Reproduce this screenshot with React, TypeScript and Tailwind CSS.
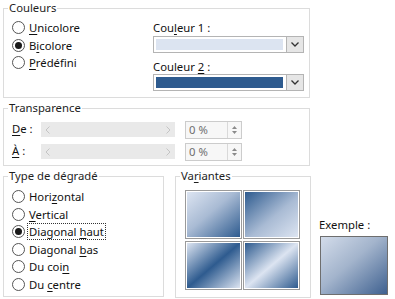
import React from "react";

const F = { fontFamily: '"Noto Sans", "Segoe UI", sans-serif' };

function U({ children }: { children: React.ReactNode }) {
  return <span className="underline underline-offset-[2px] decoration-[1px]">{children}</span>;
}

function Radio({ checked }: { checked?: boolean }) {
  return (
    <span className="w-[13px] h-[13px] rounded-full border border-[#555] bg-white flex items-center justify-center shrink-0">
      {checked && <span className="w-[7px] h-[7px] rounded-full bg-[#1a1a1a]" />}
    </span>
  );
}

function RadioRow({ checked, children, focus, h = "h-[17.5px]" }: { checked?: boolean; children: React.ReactNode; focus?: boolean; h?: string }) {
  return (
    <div className={`flex items-center ${h}`}>
      <Radio checked={checked} />
      <span
        className={`ml-[3px] leading-[15px] px-[1px] ${focus ? "outline outline-1 outline-dotted outline-[#333]" : ""}`}
      >
        {children}
      </span>
    </div>
  );
}

function Group({ title, className, children }: { title: React.ReactNode; className: string; children: React.ReactNode }) {
  return (
    <div className={`relative border border-[#dcdcdc] ${className}`}>
      <span className="absolute left-[4px] top-[-9px] bg-white px-[1px] leading-[16px] text-[#1e1e1e]">{title}</span>
      {children}
    </div>
  );
}

function Combo({ color }: { color: string }) {
  return (
    <div className="flex h-[17px] w-[151px] border border-[#b4b4b4] bg-white">
      <div className="flex-1 p-[2px] pr-[3px]">
        <div className="h-full" style={{ background: color }} />
      </div>
      <div className="w-[17px] border-l border-[#b4b4b4] bg-[#e6e6e6] flex items-center justify-center">
        <svg width="8" height="5" viewBox="0 0 8 5">
          <path d="M0.5 0.5 L4 4 L7.5 0.5" fill="none" stroke="#333" strokeWidth="1.3" />
        </svg>
      </div>
    </div>
  );
}

function Track() {
  return (
    <div className="w-[134px] h-[15px] bg-[#e9e9e9] flex items-center justify-between px-[4px]">
      <svg width="5" height="8" viewBox="0 0 5 8">
        <path d="M4.5 0.5 L1 4 L4.5 7.5" fill="none" stroke="#c4c4c4" strokeWidth="1" />
      </svg>
      <svg width="5" height="8" viewBox="0 0 5 8">
        <path d="M0.5 0.5 L4 4 L0.5 7.5" fill="none" stroke="#c4c4c4" strokeWidth="1" />
      </svg>
    </div>
  );
}

function Spin() {
  return (
    <div className="flex w-[57px] h-[18px] border border-[#cccccc] bg-[#f7f7f7]">
      <div className="flex-1 pl-[3px] text-[#6e6e6e] leading-[16px]">0 %</div>
      <div className="w-[14px] border-l border-[#d9d9d9] flex flex-col items-center justify-center gap-[2px]">
        <svg width="5" height="3" viewBox="0 0 5 3"><path d="M0 3 L2.5 0 L5 3 Z" fill="#8a8a8a" /></svg>
        <svg width="5" height="3" viewBox="0 0 5 3"><path d="M0 0 L2.5 3 L5 0 Z" fill="#8a8a8a" /></svg>
      </div>
    </div>
  );
}

const L = "#dce4f1";
const D = "#2e5b8f";

function Tile({ bg }: { bg: string }) {
  return (
    <div className="w-[57px] h-[49px] border border-[#9a9a9a] p-[1px] bg-white">
      <div className="w-full h-full" style={{ background: bg }} />
    </div>
  );
}

export default function App() {
  return (
    <div className="w-[395px] h-[299px] bg-white text-[11.3px] text-[#111] overflow-hidden" style={F}>
      <div className="pt-[8px] pl-[3px]">
        <Group title="Couleurs" className="w-[307px] h-[90px]">
          <div className="flex">
            <div className="w-[149px] pl-[8px] pt-[10px]">
              <RadioRow><U>U</U>nicolore</RadioRow>
              <RadioRow checked>B<U>i</U>colore</RadioRow>
              <RadioRow><U>P</U>rédéfini</RadioRow>
            </div>
            <div className="pt-[11px]">
              <div className="leading-[15px]">Cou<U>l</U>eur 1 :</div>
              <div className="mt-[1px]"><Combo color={L} /></div>
              <div className="leading-[15px] mt-[6px]">Couleur <U>2</U> :</div>
              <div className="mt-[0px]"><Combo color={D} /></div>
            </div>
          </div>
        </Group>

        <Group title="Transparence" className="w-[307px] h-[58px] mt-[10px]">
          <div className="pt-[11px] flex flex-col gap-[3px]">
            <div className="flex items-center h-[19px]">
              <div className="w-[37px] pl-[8px]"><U>D</U>e :</div>
              <Track />
              <div className="ml-[10px]"><Spin /></div>
            </div>
            <div className="flex items-center h-[19px]">
              <div className="w-[37px] pl-[8px]"><U>À</U> :</div>
              <Track />
              <div className="ml-[10px]"><Spin /></div>
            </div>
          </div>
        </Group>

        <div className="flex mt-[10px]">
          <Group title="Type de dégradé" className="w-[161px] h-[121px]">
            <div className="pl-[8px] pt-[11px]">
              <RadioRow>Hori<U>z</U>ontal</RadioRow>
              <RadioRow><U>V</U>ertical</RadioRow>
              <RadioRow checked focus>Diagonal <U>h</U>aut</RadioRow>
              <RadioRow>Diagonal <U>b</U>as</RadioRow>
              <RadioRow>Du coi<U>n</U></RadioRow>
              <RadioRow>Du <U>c</U>entre</RadioRow>
            </div>
          </Group>
          <Group title={<>Va<U>r</U>iantes</>} className="w-[136px] h-[122px] ml-[11px]">
            <div className="pl-[9px] pt-[13px] grid grid-cols-[57px_57px] gap-x-[1px] gap-y-[2px]">
              <Tile bg={`linear-gradient(to bottom right, ${L} 0%, #a9bbd4 45%, ${D} 100%)`} />
              <Tile bg={`linear-gradient(to bottom right, ${D} 0%, #a9bbd4 55%, ${L} 100%)`} />
              <Tile bg={`linear-gradient(to bottom right, ${L} 0%, ${D} 50%, ${L} 100%)`} />
              <Tile bg={`linear-gradient(to bottom right, ${D} 0%, ${L} 50%, ${D} 100%)`} />
            </div>
          </Group>
          <div className="ml-[7px] pt-[41px]">
            <div className="leading-[15px] pl-[1px]">Exemple :</div>
            <div
              className="mt-[4px] w-[68px] h-[59px] ml-[2px] border border-[#6e6e6e]"
              style={{ background: `linear-gradient(to bottom right, #d3dcea 0%, #a3b4cc 45%, #3f6190 100%)` }}
            />
          </div>
        </div>
      </div>
    </div>
  );
}
